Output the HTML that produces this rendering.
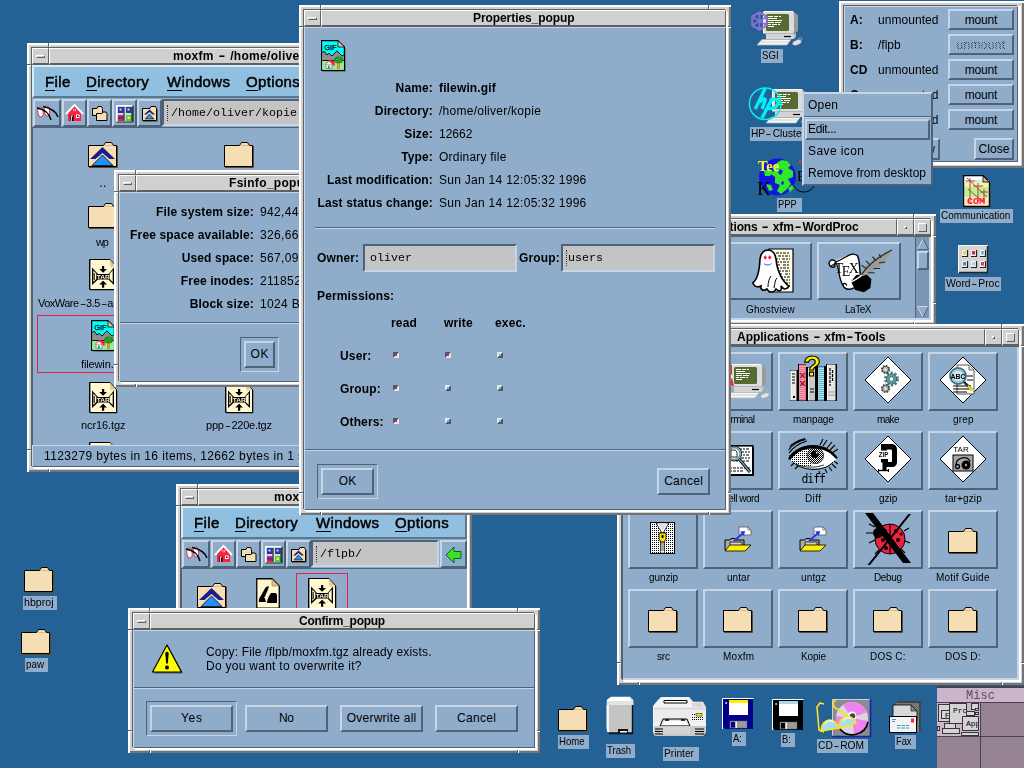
<!DOCTYPE html><html><head><meta charset="utf-8"><title>moxfm desktop</title><style>
html,body{margin:0;padding:0}
body{width:1024px;height:768px;background:#246296;overflow:hidden;position:relative;font-family:"Liberation Sans",sans-serif;font-size:12px;color:#000;line-height:14px}
div,span,svg,i{position:absolute;box-sizing:border-box}
i.d{position:static}
.ic{overflow:visible;will-change:transform}
.win{background:#D0D0D0;box-shadow:inset 2px 2px 0 #fff,inset -2px -2px 0 #747474}
.in{left:5px;top:5px;right:5px;bottom:5px;box-shadow:-1px -1px 0 #606060,1px 1px 0 #fff,2px 2px 0 #fff}
.tb{left:0;top:0;right:0;height:17px}
.mb{left:0;top:0;width:17px;height:17px;border:1px solid;border-color:#fff #606060 #606060 #fff;border-bottom-width:2px}
.mb i{position:absolute;left:3px;top:6px;width:9px;height:3px;border:1px solid;border-color:#fff #606060 #606060 #fff}
.tt{left:17px;top:0;right:0;height:17px;border:1px solid;border-color:#fff #606060 #606060 #fff;border-bottom-width:2px;font-weight:bold;text-align:center;line-height:14px;white-space:nowrap;overflow:hidden}
.tbtn{top:0;width:17px;height:17px;border:1px solid;border-color:#fff #606060 #606060 #fff;border-bottom-width:2px}
.cl{left:0;top:17px;right:0;bottom:0;background:#8FADCB;overflow:hidden}
.snk:after{content:"";position:absolute;left:0;top:0;right:0;bottom:0;box-shadow:inset 1px 1px 0 #4E6379,inset -2px -2px 0 #C6D6E6;pointer-events:none}
.dlg:after{content:"";position:absolute;left:0;top:0;right:0;bottom:0;box-shadow:inset 1px 1px 0 #C6D6E6,inset -1px -1px 0 #4E6379;pointer-events:none}
.hl{background:#606060;height:1px;width:5px}.hl:after{content:"";position:absolute;left:0;top:1px;width:5px;height:1px;background:#fff}
.vl{background:#606060;width:1px;height:5px}.vl:after{content:"";position:absolute;left:1px;top:0;height:5px;width:1px;background:#fff}
.btn{border:2px solid;border-color:#C6D6E6 #4E6379 #4E6379 #C6D6E6;background:#8FADCB;text-align:center;white-space:nowrap}
.dflt{border:1px solid;border-color:#4E6379 #C6D6E6 #C6D6E6 #4E6379}
.sep{height:2px;border-top:1px solid #4E6379;border-bottom:1px solid #C6D6E6}
.d{display:inline-block;position:static;font-style:normal;transform:scaleX(1.7);margin:0 .2em}
.t,.lbl,.btn>span,.menubar span,.tf,.mono,.tt{will-change:transform}
.t{white-space:nowrap;line-height:14px;height:14px;letter-spacing:.33px}
.b{font-weight:bold;letter-spacing:.15px}
.r{text-align:right}
.c{text-align:center}
.lbl{background:#8FADCB;white-space:nowrap;line-height:14px;height:14px;text-align:center}
.menubar{left:0;top:0;right:0;height:33px;background:#91BFDF;border:2px solid;border-color:#D6ECFA #58788E #58788E #D6ECFA;font-size:15px}
.menubar span{top:6px;line-height:18px;white-space:nowrap;-webkit-text-stroke:0.5px #000;letter-spacing:.35px}
.menubar u{text-decoration:none;border-bottom:1px solid #000;display:inline-block;line-height:17px}
.tool{left:0;top:33px;right:0;height:30px;background:#8FADCB;border-bottom:1px solid #4E6379}
.tbb{top:1px;width:25px;height:28px;border:2px solid;border-color:#C6D6E6 #4E6379 #4E6379 #C6D6E6}
.tf{background:#C4C4C4;border:2px solid;border-color:#4E6379 #C6D6E6 #C6D6E6 #4E6379;font-family:"Liberation Mono",monospace;font-size:11.67px;white-space:nowrap;overflow:hidden}
.mono{font-family:"Liberation Mono",monospace;font-size:11.67px}
.appb{width:70px;height:59px;border:2px solid;border-color:#C6D6E6 #4E6379 #4E6379 #C6D6E6}
.chk{width:7px;height:7px;border:1px solid;border-color:#4E6379 #C6D6E6 #C6D6E6 #4E6379;background:#C4C4C4}
</style></head><body><div style="left:0;top:0;width:1024px;height:768px;z-index:0"><svg class="ic" style="left:750px;top:10px" width="56" height="37" viewBox="0 0 56 37" ><g transform="translate(0,0)"><path d="M43 1.500 L48 5 V21 L43 24 Z" fill="#9a9a9a"/><rect x="13" y="1" width="31" height="23" rx="2" fill="#dcdcdc"/><path d="M13.500 23 V3 Q13.500 1.500 15 1.500 H43" fill="none" stroke="#fafafa" stroke-width="1"/><path d="M14 23.500 H43" stroke="#b4b4b4"/><rect x="16" y="4" width="23" height="17" rx="1.500" fill="#556B2F"/><path d="M18 6.500 h5 m1 0 h4 m1 0 h2 M18 8.500 h9 M18 10.500 h14 M18 12.500 h6 m1 0 h6 M18 14.500 h3 m1 0 h5 m1 0 h2 M18 16.500 h6" stroke="#fff" stroke-width="1.100"/><path d="M16 24 H44 L46 22.500 V27 L44 29 H16 Z" fill="#b8b8b8"/><path d="M16 24 H44 V29 H16 Z" fill="#d4d4d4"/><path d="M34 26.500 H41" stroke="#000" stroke-width="1.200"/><path d="M12 29.500 H41 L37 35 H7 Z" fill="#f6f6f6" stroke="#b8b8b8" stroke-width="0.800"/><path d="M11 32 H38" stroke="#d0d0d0"/><path d="M43 32 l5 -2.500 l3.500 1 l-1 3 l-5 2 l-3 -1 z" fill="#e4e4e4" stroke="#999" stroke-width="0.600"/><path d="M48 29.500 c2 -3 4.500 -2 3.500 0.500" fill="none" stroke="#bbb" stroke-width="0.800"/></g><g stroke="#8A70D6" stroke-width="1.500" fill="none" stroke-linejoin="round"><path d="M9.500 2 L17 6.500 V15.500 L9.500 20 L2 15.500 V6.500 Z"/><path d="M9.500 2 V20 M2 6.500 L17 15.500 M2 15.500 L17 6.500"/><path d="M5.500 4.500 L13.500 4.500 L17 11 L13.500 17.500 L5.500 17.500 L2 11 Z" stroke-width="1"/></g></svg><div class="lbl" style="left:761px;top:49px;width:22px;height:14px;line-height:12px;text-align:left;font-size:11px;letter-spacing:0px;padding-left:1.00px;overflow:hidden;"><span style="position:static;display:inline-block;transform:scaleX(0.875);transform-origin:0 0">SGI</span></div><svg class="ic" style="left:748px;top:87px" width="70" height="36" viewBox="0 0 70 36" ><g transform="translate(11,1)"><path d="M43 1.500 L48 5 V21 L43 24 Z" fill="#9a9a9a"/><rect x="13" y="1" width="31" height="23" rx="2" fill="#dcdcdc"/><path d="M13.500 23 V3 Q13.500 1.500 15 1.500 H43" fill="none" stroke="#fafafa" stroke-width="1"/><path d="M14 23.500 H43" stroke="#b4b4b4"/><rect x="16" y="4" width="23" height="17" rx="1.500" fill="#556B2F"/><path d="M18 6.500 h5 m1 0 h4 m1 0 h2 M18 8.500 h9 M18 10.500 h14 M18 12.500 h6 m1 0 h6 M18 14.500 h3 m1 0 h5 m1 0 h2 M18 16.500 h6" stroke="#fff" stroke-width="1.100"/><path d="M16 24 H44 L46 22.500 V27 L44 29 H16 Z" fill="#b8b8b8"/><path d="M16 24 H44 V29 H16 Z" fill="#d4d4d4"/><path d="M34 26.500 H41" stroke="#000" stroke-width="1.200"/><path d="M12 29.500 H41 L37 35 H7 Z" fill="#f6f6f6" stroke="#b8b8b8" stroke-width="0.800"/><path d="M11 32 H38" stroke="#d0d0d0"/><path d="M43 32 l5 -2.500 l3.500 1 l-1 3 l-5 2 l-3 -1 z" fill="#e4e4e4" stroke="#999" stroke-width="0.600"/><path d="M48 29.500 c2 -3 4.500 -2 3.500 0.500" fill="none" stroke="#bbb" stroke-width="0.800"/></g><circle cx="17.200" cy="16.700" r="15.800" fill="none" stroke="#00F0F8" stroke-width="1.500"/><path d="M17.200 1.500 L7.200 22 M11.600 15.500 C13.500 12 17 10.500 17.200 13 C17.200 15 15 19 14.200 22 M23.500 12.800 L14 31 M22 13.200 C27 11 31 12.500 30 16.500 C29 20 25 22 19.500 21.500" fill="none" stroke="#00F0F8" stroke-width="3.400"/></svg><div class="lbl" style="left:750px;top:127px;width:58px;height:14px;line-height:12px;text-align:left;font-size:11px;letter-spacing:0px;padding-left:1.00px;overflow:hidden;"><span style="position:static;display:inline-block;transform:scaleX(0.928);transform-origin:0 0">HP<i class="d">-</i>Cluster</span></div><svg class="ic" style="left:758px;top:157px" width="62" height="40" viewBox="0 0 62 40" ><circle cx="19.500" cy="20" r="18.500" fill="#1414e0"/><path d="M20 5 l4 -2 l5 1 l4 4 l-3 3 l5 3 l0 6 l-5 2 l3 5 l-5 6 l-5 4 l-4 -3 l3 -6 l-5 -2 l0 -6 l-4 -3 l4 -4 l-1 -4 z M6 14 l6 -2 l3 3 l-3 4 l-5 0 z M8 27 l5 1 l2 5 l-4 1 z M30 31 l4 -3 l2 3 l-4 4 z M26 7 l3 2 l-2 3 z" fill="#30e828"/><path d="M22 12 l3 2 l-2 4 l-3 -2 z M24 24 l2 1 l-1 3 l-2 -1 z" fill="#1414e0"/><text x="0" y="13.500" font-family="Liberation Serif, serif" font-weight="bold" font-size="14.500" fill="#ffff30">Tee</text><text x="-1" y="38" font-family="Liberation Serif, serif" font-size="19" fill="#000">K</text><text x="39" y="24" font-family="Liberation Serif, serif" font-size="14" fill="#000">E</text><path d="M36 29 C40 37 52 37 56 29" fill="none" stroke="#000" stroke-width="1"/><rect x="41" y="3" width="2" height="3" fill="#f03030"/></svg><div class="lbl" style="left:777px;top:198px;width:25px;height:14px;line-height:12px;text-align:left;font-size:11px;letter-spacing:0px;padding-left:1.00px;overflow:hidden;"><span style="position:static;display:inline-block;transform:scaleX(0.850);transform-origin:0 0">PPP</span></div><svg class="ic" style="left:963px;top:175px" width="28" height="33" viewBox="0 0 28 33" ><path d="M0.750 0.750 H20 L26.250 7 V31.250 H0.750 Z" fill="#e8f4d0" stroke="#000" stroke-width="1.300"/><rect x="1.500" y="1.500" width="19" height="5.500" fill="#fff"/><rect x="1.500" y="5" width="24" height="3" fill="#c8f0f8"/><rect x="1.500" y="8" width="24" height="4" fill="#fff0a0"/><rect x="1.500" y="12" width="24" height="11" fill="#b8f0a0"/><rect x="1.500" y="22" width="24" height="8.500" fill="#f8e8c0"/><path d="M4 3 L24 22 M3 6 H12 M7 3 V28 M10 11 H20 M15 8 V26 M17 17 H25 M21 14 V28 M5 14 l14 12" stroke="#c03020" stroke-width="0.900" fill="none"/><path d="M20 1 V7 H26 Z" fill="#DEB887" stroke="#000" stroke-width="0.800"/><text x="13" y="29" font-size="9" font-weight="bold" text-anchor="middle" fill="#ff1040" font-family="Liberation Mono, monospace" textLength="18" lengthAdjust="spacingAndGlyphs">COM</text><path d="M27.500 8 V32.500 H2" stroke="#3b4b5b" fill="none"/></svg><div class="lbl" style="left:940px;top:209px;width:73px;height:14px;line-height:12px;text-align:left;font-size:11px;letter-spacing:0px;padding-left:1.00px;overflow:hidden;"><span style="position:static;display:inline-block;transform:scaleX(0.906);transform-origin:0 0">Communication</span></div><svg class="ic" style="left:958px;top:245px" width="30" height="28" viewBox="0 0 30 28" ><rect x="0" y="0" width="30" height="28" fill="#d4d4d4"/><path d="M0.500 28 V0.500 H30" stroke="#f8f8f8" fill="none"/><path d="M29.500 1 V27.500 H1" stroke="#222" fill="none" stroke-width="1.400"/><rect x="4" y="5" width="5" height="6" fill="#f4f4f4"/><path d="M9.5 5 V11.5 H4" stroke="#222" fill="none" stroke-width="1.200"/><rect x="5" y="6" width="3" height="3.500" fill="#f0d040"/><rect x="13" y="5" width="5" height="6" fill="#f4f4f4"/><path d="M18.5 5 V11.5 H13" stroke="#222" fill="none" stroke-width="1.200"/><rect x="14" y="6" width="3" height="3.500" fill="#e02050"/><rect x="22" y="5" width="5" height="6" fill="#f4f4f4"/><path d="M27.5 5 V11.5 H22" stroke="#222" fill="none" stroke-width="1.200"/><rect x="23" y="6" width="3" height="3.500" fill="#60c0e0"/><rect x="4" y="16" width="5" height="6" fill="#f4f4f4"/><path d="M9.5 16 V22.5 H4" stroke="#222" fill="none" stroke-width="1.200"/><rect x="5" y="17" width="3" height="3.500" fill="#509090"/><rect x="13" y="16" width="5" height="6" fill="#f4f4f4"/><path d="M18.5 16 V22.5 H13" stroke="#222" fill="none" stroke-width="1.200"/><rect x="14" y="17" width="3" height="3.500" fill="#a0d8f0"/><rect x="22" y="16" width="5" height="6" fill="#f4f4f4"/><path d="M27.5 16 V22.5 H22" stroke="#222" fill="none" stroke-width="1.200"/><rect x="23" y="17" width="3" height="3.500" fill="#d04070"/></svg><div class="lbl" style="left:945px;top:277px;width:56px;height:14px;line-height:12px;text-align:left;font-size:11px;letter-spacing:0px;padding-left:1.00px;overflow:hidden;"><span style="position:static;display:inline-block;transform:scaleX(0.944);transform-origin:0 0">Word<i class="d">-</i>Proc</span></div><svg class="ic" style="left:24px;top:567px" width="30" height="26" viewBox="0 0 30 26" ><path d="M0.5 3.5 H15.5 L17.5 0.5 H23.5 L25.5 3.5 H28.5 V24.5 H0.5 Z" fill="#F5DEB3" stroke="#000" stroke-width="1"/><path d="M29.5 4 V25.5 H1" fill="none" stroke="#5b4a2c" stroke-width="1"/><path d="M16.500 3.500 H25" stroke="#d9bc8c" stroke-width="1"/></svg><div class="lbl" style="left:23px;top:596px;width:34px;height:14px;line-height:12px;text-align:left;font-size:11px;letter-spacing:0px;padding-left:1.00px;overflow:hidden;"><span style="position:static;display:inline-block;transform:scaleX(0.965);transform-origin:0 0">hbproj</span></div><svg class="ic" style="left:21px;top:629px" width="30" height="26" viewBox="0 0 30 26" ><path d="M0.5 3.5 H15.5 L17.5 0.5 H23.5 L25.5 3.5 H28.5 V24.5 H0.5 Z" fill="#F5DEB3" stroke="#000" stroke-width="1"/><path d="M29.5 4 V25.5 H1" fill="none" stroke="#5b4a2c" stroke-width="1"/><path d="M16.500 3.500 H25" stroke="#d9bc8c" stroke-width="1"/></svg><div class="lbl" style="left:25px;top:658px;width:23px;height:14px;line-height:12px;text-align:left;font-size:11px;letter-spacing:0px;padding-left:1.00px;overflow:hidden;"><span style="position:static;display:inline-block;transform:scaleX(0.892);transform-origin:0 0">paw</span></div><svg class="ic" style="left:558px;top:706px" width="30" height="26" viewBox="0 0 30 26" ><path d="M0.5 3.5 H15.5 L17.5 0.5 H23.5 L25.5 3.5 H28.5 V24.5 H0.5 Z" fill="#F5DEB3" stroke="#000" stroke-width="1"/><path d="M29.5 4 V25.5 H1" fill="none" stroke="#5b4a2c" stroke-width="1"/><path d="M16.500 3.500 H25" stroke="#d9bc8c" stroke-width="1"/></svg><div class="lbl" style="left:558px;top:735px;width:31px;height:14px;line-height:12px;text-align:left;font-size:11px;letter-spacing:0px;padding-left:1.00px;overflow:hidden;"><span style="position:static;display:inline-block;transform:scaleX(0.875);transform-origin:0 0">Home</span></div><svg class="ic" style="left:606px;top:696px" width="28" height="39" viewBox="0 0 28 39" ><path d="M1 4 L5 1 H24 L27 4 V9 H1 Z" fill="#fff" stroke="#fff" stroke-width="0.500"/><path d="M1 9 H27 V6 L24 1" fill="none" stroke="#bbb" stroke-width="0.800"/><rect x="1" y="5" width="26" height="4" fill="#e4e4e4"/><path d="M2 9 H26 V36 H2 Z" fill="#c4c4c4"/><path d="M2 9 V36" stroke="#f4f4f4" stroke-width="2"/><path d="M26.500 9 V37.500 H3" stroke="#111" stroke-width="1.400" fill="none"/><path d="M3 36 L1 33 V9" stroke="#fff" fill="none"/><rect x="12" y="33" width="10" height="4" fill="#111"/><rect x="14" y="35" width="7" height="1.500" fill="#fff"/></svg><div class="lbl" style="left:606px;top:744px;width:29px;height:14px;line-height:12px;text-align:left;font-size:11px;letter-spacing:0px;padding-left:1.00px;overflow:hidden;"><span style="position:static;display:inline-block;transform:scaleX(0.873);transform-origin:0 0">Trash</span></div><svg class="ic" style="left:653px;top:696px" width="54" height="41" viewBox="0 0 54 41" ><path d="M8 1 H36 L40 6 H50 L53 12 V36 L50 40 H2 L0 36 V10 L4 5 Z" fill="#f4f4f4"/><path d="M11 4.500 H34 V7 H11 Z" fill="#fff" stroke="#000" stroke-width="1"/><path d="M36 1 L40 6 H50 L53 12 H1" fill="none" stroke="#ccc" stroke-width="0.800"/><path d="M38 7 H49 L51 11 H40 Z" fill="#d8d8d8"/><rect x="1" y="13" width="52" height="13" fill="#ececec"/><path d="M1 13 H53" stroke="#d0d0d0"/><rect x="38" y="17" width="13" height="8" fill="#f8f8f8"/><rect x="43" y="17.500" width="6" height="2.500" fill="#ffee00" stroke="#000" stroke-width="0.500"/><path d="M39 18.500 h3 M39 21.500 h11 M39 23.500 h11" stroke="#000" stroke-width="1" stroke-dasharray="1 1"/><path d="M10 23 H34 L37 30 H7 Z" fill="#e0e0e0" stroke="#000" stroke-width="1"/><path d="M12 24 h4 M28 24 h4" stroke="#000" stroke-width="1.500"/><path d="M9 29 L12 25 H32 L35 29 Z" fill="#fff"/><path d="M1 30 H53 V36 L50 40 H2 L1 36 Z" fill="#c8c8c8"/><path d="M7 31 H37 V38 H7 Z" fill="#d4d4d4"/><path d="M2 33 h8 M2 35.500 h8 M2 38 h8 M42 33 h9 M42 35.500 h9 M42 38 h9" stroke="#000" stroke-width="1"/></svg><div class="lbl" style="left:663px;top:747px;width:36px;height:14px;line-height:12px;text-align:left;font-size:11px;letter-spacing:0px;padding-left:1.00px;overflow:hidden;"><span style="position:static;display:inline-block;transform:scaleX(0.926);transform-origin:0 0">Printer</span></div><svg class="ic" style="left:722px;top:698px" width="32" height="32" viewBox="0 0 32 32" ><path d="M1 1 H31 V31 H3 L1 29 Z" fill="#00008B"/><path d="M0.500 31 V0.500 H31.500" stroke="#fff" stroke-width="1" fill="none"/><rect x="7" y="2" width="19" height="15" fill="#fff"/><rect x="7" y="2" width="19" height="3" fill="#ffee00"/><rect x="8" y="23" width="17" height="7" fill="#9a9a9a" stroke="#666" stroke-width="0.500"/><rect x="9" y="24" width="4" height="5.500" fill="#00008B"/><rect x="13.500" y="23.500" width="1.500" height="6.500" fill="#eee"/><rect x="3.500" y="4" width="1.200" height="2" fill="#fff"/></svg><div class="lbl" style="left:732px;top:732px;width:14px;height:14px;line-height:12px;text-align:left;font-size:11px;letter-spacing:0px;padding-left:1.00px;overflow:hidden;"><span style="position:static;display:inline-block;transform:scaleX(0.856);transform-origin:0 0">A:</span></div><svg class="ic" style="left:772px;top:699px" width="32" height="32" viewBox="0 0 32 32" ><path d="M1 1 H31 V31 H3 L1 29 Z" fill="#000"/><path d="M0.500 31 V0.500 H31.500" stroke="#fff" stroke-width="1" fill="none"/><rect x="7" y="2" width="19" height="15" fill="#fff"/><rect x="7" y="2" width="19" height="3" fill="#a8d8f0"/><rect x="8" y="23" width="17" height="7" fill="#9a9a9a" stroke="#666" stroke-width="0.500"/><rect x="9" y="24" width="4" height="5.500" fill="#000"/><rect x="13.500" y="23.500" width="1.500" height="6.500" fill="#eee"/><rect x="3.500" y="4" width="1.200" height="2" fill="#fff"/></svg><div class="lbl" style="left:781px;top:733px;width:14px;height:14px;line-height:12px;text-align:left;font-size:11px;letter-spacing:0px;padding-left:1.00px;overflow:hidden;"><span style="position:static;display:inline-block;transform:scaleX(0.847);transform-origin:0 0">B:</span></div><svg class="ic" style="left:816px;top:698px" width="56" height="40" viewBox="0 0 56 40" ><rect x="16" y="1" width="38" height="37" fill="#8a8a98"/><path d="M16.500 38 V1.500 H54" stroke="#d0d0d0" fill="none"/><path d="M54.500 1 V38.500 H16" stroke="#2020a0" stroke-width="1.600" fill="none"/><circle cx="36" cy="20" r="16" fill="#d8d8d8"/><path d="M36 20 L27 7 A16 16 0 0 1 51 14 Z M36 20 L52 23 A16 16 0 0 1 38 36 Z M36 20 L24 31 A16 16 0 0 1 20 18 Z" fill="#ee82ee"/><circle cx="36" cy="20" r="16" fill="none" stroke="#000" stroke-width="0" /><path d="M24 31 A16 16 0 0 0 52 24" fill="none" stroke="#000" stroke-width="1.600"/><circle cx="36" cy="18" r="4.500" fill="#fff"/><circle cx="36.500" cy="18" r="2.800" fill="#444"/><path d="M8 6 L4 5 L1 9 L3 32 L8 34 M20 2 L17 4 L18 9 L40 24" fill="none" stroke="#ffe020" stroke-width="1.600"/><path d="M5 33 C5 20 20 18 22 30 Z M23 30 C23 17 36 15 40 25 Z" fill="#a0e0f0" stroke="#ffe020" stroke-width="1.600"/><path d="M9 26 C11 22 15 22 17 24 M27 23 C29 19 33 19 35 21" stroke="#fff" stroke-width="1.200" fill="none"/></svg><div class="lbl" style="left:817px;top:739px;width:51px;height:14px;line-height:12px;text-align:left;font-size:11px;letter-spacing:0px;padding-left:1.00px;overflow:hidden;"><span style="position:static;display:inline-block;transform:scaleX(0.929);transform-origin:0 0">CD<i class="d">-</i>ROM</span></div><svg class="ic" style="left:889px;top:701px" width="33" height="33" viewBox="0 0 33 33" ><path d="M8 0 H32 V30 H26 V6 H8 Z" fill="#444"/><path d="M6 2 H30 V31 H24 Z" fill="#777"/><path d="M4 4 H22 L28 10 V20 H4 Z" fill="#d8d8d8" stroke="#000" stroke-width="0.800"/><path d="M22 4 V10 H28 Z" fill="#888" stroke="#000" stroke-width="0.600"/><rect x="0.500" y="15.500" width="27" height="16" fill="#f4f4f4" stroke="#000" stroke-width="1"/><path d="M3 18.500 h4 M3 20.500 h3 M8 24.500 h4 m1 0 h3 m1 0 h3 M8 27 h3 m1 0 h4 m1 0 h3" stroke="#4090e0" stroke-width="1"/><rect x="22" y="17.500" width="3" height="4" fill="#ff2040"/></svg><div class="lbl" style="left:895px;top:735px;width:21px;height:14px;line-height:12px;text-align:left;font-size:11px;letter-spacing:0px;padding-left:1.00px;overflow:hidden;"><span style="position:static;display:inline-block;transform:scaleX(0.846);transform-origin:0 0">Fax</span></div></div>
<div class="win" style="left:27px;top:43px;width:433px;height:429px;z-index:1"><div class="vl" style="left:21px;top:0px"></div><div class="vl" style="left:410px;top:0px"></div><div class="vl" style="left:21px;top:424px"></div><div class="vl" style="left:410px;top:424px"></div><div class="hl" style="left:0px;top:21px"></div><div class="hl" style="left:428px;top:21px"></div><div class="hl" style="left:0px;top:406px"></div><div class="hl" style="left:428px;top:406px"></div><div class="in" style=""><div class="tb"><div class="mb"><i></i></div><div class="tt" style="right:0px;"><span class="t b" style="left:122.5px;top:0px;letter-spacing:.3px">moxfm <i class="d">-</i> /home/oliver/kopie</span></div></div><div class="cl"><div class="menubar"><span style="left:11px"><u>F</u>ile</span><span style="left:52px"><u>D</u>irectory</span><span style="left:133px"><u>W</u>indows</span><span style="left:212px"><u>O</u>ptions</span></div><div class="tool"><div class="tbb" style="left:1px;width:28px"><svg class="ic" style="left:-1px;top:-1px" width="25" height="26" viewBox="0 0 25 26"><ellipse cx="6.5" cy="12" rx="2.6" ry="5" fill="#fff" stroke="#d04060" stroke-width="1" transform="rotate(-8 6.5 12)"/><ellipse cx="13" cy="11" rx="2.6" ry="5" fill="#fff" stroke="#d04060" stroke-width="1" transform="rotate(-8 13 11)"/><path d="M3 8 C9 9 15 12 17 20 M9 6.5 C16 8 22 11 24 17" fill="none" stroke="#000" stroke-width="1.5"/></svg></div><div class="tbb" style="left:30px;width:25px"><svg class="ic" style="left:-2px;top:-1px" width="25" height="26" viewBox="0 0 25 26"><path d="M4 14 L12.5 5 L21 14" fill="none" stroke="#fff" stroke-width="2"/><path d="M6 13.5 L12.5 6.5 L19 13.5 V21 H6 Z" fill="#ff2040"/><rect x="8.5" y="15" width="3" height="6" fill="#000"/><rect x="9" y="15.5" width="2" height="5.5" fill="#fff"/><rect x="9.8" y="16.5" width="1.2" height="4.5" fill="#000"/><rect x="14" y="14.5" width="3.5" height="3.5" fill="#fff"/><rect x="15" y="15.5" width="1.5" height="1.5" fill="#000"/><rect x="11.5" y="9" width="2.2" height="2.2" fill="#fff"/><rect x="12.1" y="9.6" width="1" height="1" fill="#000"/></svg></div><div class="tbb" style="left:55px;width:25px"><svg class="ic" style="left:-2px;top:-1px" width="25" height="26" viewBox="0 0 25 26"><path d="M5.500 8.500 H10 L11 6.500 H14.500 L15.500 8.500 V15.500 H5.500 Z" fill="#F5DEB3" stroke="#000"/><path d="M9.500 13.500 H15 L16 12 H19 L20 13.500 V20.500 H9.500 Z" fill="#F5DEB3" stroke="#000"/></svg></div><div class="tbb" style="left:80px;width:25px"><svg class="ic" style="left:-2px;top:-1px" width="25" height="26" viewBox="0 0 25 26"><rect x="4" y="5" width="17" height="17" fill="#d8d8d8"/><path d="M4.5 22 V5.500 H21" stroke="#fff" fill="none"/><path d="M21 5.500 V22 H4.500" stroke="#222" fill="none" stroke-width="1.2"/><rect x="6" y="7" width="5.5" height="6" fill="#2030d0"/><rect x="14" y="7" width="5.500" height="6" fill="#2030d0"/><rect x="6" y="15" width="5.500" height="6" fill="#e02050"/><rect x="14" y="15" width="5.500" height="6" fill="#40d040"/><rect x="7.500" y="8.500" width="2" height="2" fill="#f0f040"/><rect x="15.500" y="8.500" width="2" height="2" fill="#f0f040"/><rect x="6" y="17" width="5.500" height="1.500" fill="#2030d0"/><rect x="15.500" y="16.500" width="2.500" height="2.500" fill="#f0f040"/><path d="M12 7 V21 M20 7 V21" stroke="#000" stroke-width="1"/></svg></div><div class="tbb" style="left:105px;width:25px"><svg class="ic" style="left:-2px;top:-1px" width="25" height="26" viewBox="0 0 25 26"><path d="M5.500 8.500 H13 L14 6.500 H18.500 L19.500 8.500 V20.500 H5.500 Z" fill="#F5DEB3" stroke="#000"/><path d="M7 14.500 L12.500 9.500 L18 14.500 H15.500 L12.500 12 L9.500 14.500 Z" fill="#1c1c8c"/><path d="M8 19 L12.500 14 L17 19 Z" fill="#1e90ff" stroke="#000" stroke-width="0.6"/><path d="M20.500 9 V21.500 H6" stroke="#665" fill="none"/></svg></div><div class="tf" style="left:130px;top:1px;width:300px;height:27px;line-height:23px;padding-left:7px;padding-top:1px"><i style="position:absolute;left:3px;top:4px;width:3px;height:16px;border-left:1px dotted #333"></i>/home/oliver/kopie</div></div><div style="left:0;top:63px;right:0;height:317px;border-left:1px solid #4E6379;border-top:0 solid #4E6379;overflow:hidden"><svg class="ic" style="left:55px;top:14px" width="30" height="26" viewBox="0 0 30 26" ><path d="M0.5 3.5 H15.5 L17.5 0.5 H23.5 L25.5 3.5 H28.5 V24.5 H0.5 Z" fill="#F5DEB3" stroke="#000" stroke-width="1"/><path d="M29.5 4 V25.5 H1" fill="none" stroke="#5b4a2c" stroke-width="1"/><path d="M16.500 3.500 H25" stroke="#d9bc8c" stroke-width="1"/><path d="M2 17 L14.5 5 L27 17 H21.5 L14.5 11 L7.5 17 Z" fill="#1c1c8c"/><path d="M4 23.5 L14.5 13 L25 23.5 Z" fill="#1e90ff" stroke="#000" stroke-width="0.8"/></svg><span class="t c" style="left:40px;top:48px;width:60px;">..</span><svg class="ic" style="left:191px;top:14px" width="30" height="26" viewBox="0 0 30 26" ><path d="M0.5 3.5 H15.5 L17.5 0.5 H23.5 L25.5 3.5 H28.5 V24.5 H0.5 Z" fill="#F5DEB3" stroke="#000" stroke-width="1"/><path d="M29.5 4 V25.5 H1" fill="none" stroke="#5b4a2c" stroke-width="1"/><path d="M16.500 3.500 H25" stroke="#d9bc8c" stroke-width="1"/></svg><svg class="ic" style="left:55px;top:75px" width="30" height="26" viewBox="0 0 30 26" ><path d="M0.5 3.5 H15.5 L17.5 0.5 H23.5 L25.5 3.5 H28.5 V24.5 H0.5 Z" fill="#F5DEB3" stroke="#000" stroke-width="1"/><path d="M29.5 4 V25.5 H1" fill="none" stroke="#5b4a2c" stroke-width="1"/><path d="M16.500 3.500 H25" stroke="#d9bc8c" stroke-width="1"/></svg><span class="t " style="left:63.30px;top:107px;letter-spacing:-1.135px;font-size:11px;">wp</span><svg class="ic" style="left:56px;top:131px" width="29" height="32" viewBox="0 0 29 32" ><path d="M0.500 0.500 H21 L27.500 7.500 V30.500 H0.500 Z" fill="#FFF8D0" stroke="#000" stroke-width="1"/><path d="M1.250 1 V30" stroke="#000" stroke-width="0.700"/><path d="M2.200 1.500 V29.500" stroke="#fff" stroke-width="0.800"/><path d="M21 1 V7.500 H27 Z" fill="#E6C898"/><path d="M21.500 8.300 H27" stroke="#E6C898" stroke-width="0.800"/><path d="M3 8.500 V26 L9 20.500 H19.500 L25 26 V8.500 L19.500 15 H9 Z" fill="#000"/><path d="M4.300 11.500 V23 L7.300 20 V14.500 Z M23.700 11.500 V23 L20.700 20 V14.500 Z" fill="#FFF8D0"/><path d="M5.200 14 V21" stroke="#000" stroke-width="1"/><path d="M13 7 h2.200 v3 h2.800 l-3.900 3.700 l-3.900 -3.700 h2.800 z M13 28.700 h2.200 v-3.200 h2.800 l-3.900 -3.700 l-3.900 3.700 h2.800 z" fill="#000"/><text x="14.200" y="20" font-size="6" font-weight="bold" text-anchor="middle" fill="#FFF8D0" font-family="Liberation Sans, sans-serif" textLength="13" lengthAdjust="spacingAndGlyphs">TAR</text><path d="M28.500 8.500 V31.500 H1.500" stroke="#6f7f90" fill="none"/></svg><span class="t " style="left:5.00px;top:168px;letter-spacing:-0.524px;font-size:11px;">VoxWare<i class="d">-</i>3.5<i class="d">-</i>a</span><div style="left:4px;top:187px;width:130px;height:58px;border:1px solid #e02050"></div><svg class="ic" style="left:58px;top:192px" width="25" height="32" viewBox="0 0 25 32" ><path d="M0.600 0.600 H17 L23.400 7 V30.400 H0.600 Z" fill="#00FFFF" stroke="#000" stroke-width="1.200"/><path d="M1.200 13 L3.500 11.500 L6 15 L8 13.200 L11 16 L16 10.800 L18 13 L21 16 L22.800 15 V21 H1.200 Z" fill="#8c8c8c"/><path d="M1.200 12.500 L3.500 11.300 L6 15 L8 13.200 L11 16 L16 10.800 L18 13 L21 16 L22.800 15" fill="none" stroke="#000" stroke-width="0.900"/><path d="M3 19 l2 -3 M7 19 l2 -2.500 M12 19 l2 -3" stroke="#aaa" stroke-width="0.600"/><rect x="1.200" y="20.500" width="21.600" height="9.300" fill="#98EE98"/><path d="M1.200 20.500 H22.800" stroke="#000" stroke-width="0.900"/><path d="M17 1 V7 H23 Z" fill="#E6C898"/><path d="M17 1 V7 H23" fill="none" stroke="#000" stroke-width="0.800"/><path d="M3 25 L8 20 L13 25 V26 L12 25 L8 21.500 Z" fill="#ff2040"/><path d="M8 20 L13.500 21 L14 25.500 L12 25 Z" fill="#ff2040"/><rect x="5" y="24" width="6" height="4.500" fill="#ececec" stroke="#667" stroke-width="0.600"/><path d="M5 24 L8 21.500 L11 24 Z" fill="#ececec"/><rect x="7" y="25.500" width="1.600" height="3" fill="#667"/><ellipse cx="17.500" cy="20" rx="4.500" ry="3.600" fill="#228B22"/><circle cx="16" cy="19.500" r=".6" fill="#5f5"/><circle cx="18.500" cy="18.500" r=".6" fill="#5f5"/><circle cx="19" cy="21" r=".6" fill="#5f5"/><circle cx="15" cy="21.500" r=".5" fill="#5f5"/><rect x="16.600" y="23" width="2" height="5.500" fill="#FFA500" stroke="#a52" stroke-width="0.500"/><text x="9.400" y="9.800" font-size="8" text-anchor="middle" font-family="Liberation Sans, sans-serif" fill="#000" stroke="#000" stroke-width="0.250" textLength="12.500" lengthAdjust="spacingAndGlyphs">GIF</text><path d="M24.500 8 V31.500 H2" stroke="#6a7a8a" fill="none"/></svg><span class="t " style="left:47.50px;top:229px;letter-spacing:-0.127px;font-size:11px;">filewin.gif</span><svg class="ic" style="left:56px;top:254px" width="29" height="32" viewBox="0 0 29 32" ><path d="M0.500 0.500 H21 L27.500 7.500 V30.500 H0.500 Z" fill="#FFF8D0" stroke="#000" stroke-width="1"/><path d="M1.250 1 V30" stroke="#000" stroke-width="0.700"/><path d="M2.200 1.500 V29.500" stroke="#fff" stroke-width="0.800"/><path d="M21 1 V7.500 H27 Z" fill="#E6C898"/><path d="M21.500 8.300 H27" stroke="#E6C898" stroke-width="0.800"/><path d="M3 8.500 V26 L9 20.500 H19.500 L25 26 V8.500 L19.500 15 H9 Z" fill="#000"/><path d="M4.300 11.500 V23 L7.300 20 V14.500 Z M23.700 11.500 V23 L20.700 20 V14.500 Z" fill="#FFF8D0"/><path d="M5.200 14 V21" stroke="#000" stroke-width="1"/><path d="M13 7 h2.200 v3 h2.800 l-3.900 3.700 l-3.900 -3.700 h2.800 z M13 28.700 h2.200 v-3.200 h2.800 l-3.900 -3.700 l-3.900 3.700 h2.800 z" fill="#000"/><text x="14.200" y="20" font-size="6" font-weight="bold" text-anchor="middle" fill="#FFF8D0" font-family="Liberation Sans, sans-serif" textLength="13" lengthAdjust="spacingAndGlyphs">TAR</text><path d="M28.500 8.500 V31.500 H1.500" stroke="#6f7f90" fill="none"/></svg><span class="t " style="left:47.50px;top:290px;letter-spacing:-0.096px;font-size:11px;">ncr16.tgz</span><svg class="ic" style="left:192px;top:254px" width="29" height="32" viewBox="0 0 29 32" ><path d="M0.500 0.500 H21 L27.500 7.500 V30.500 H0.500 Z" fill="#FFF8D0" stroke="#000" stroke-width="1"/><path d="M1.250 1 V30" stroke="#000" stroke-width="0.700"/><path d="M2.200 1.500 V29.500" stroke="#fff" stroke-width="0.800"/><path d="M21 1 V7.500 H27 Z" fill="#E6C898"/><path d="M21.500 8.300 H27" stroke="#E6C898" stroke-width="0.800"/><path d="M3 8.500 V26 L9 20.500 H19.500 L25 26 V8.500 L19.500 15 H9 Z" fill="#000"/><path d="M4.300 11.500 V23 L7.300 20 V14.500 Z M23.700 11.500 V23 L20.700 20 V14.500 Z" fill="#FFF8D0"/><path d="M5.200 14 V21" stroke="#000" stroke-width="1"/><path d="M13 7 h2.200 v3 h2.800 l-3.900 3.700 l-3.900 -3.700 h2.800 z M13 28.700 h2.200 v-3.200 h2.800 l-3.900 -3.700 l-3.900 3.700 h2.800 z" fill="#000"/><text x="14.200" y="20" font-size="6" font-weight="bold" text-anchor="middle" fill="#FFF8D0" font-family="Liberation Sans, sans-serif" textLength="13" lengthAdjust="spacingAndGlyphs">TAR</text><path d="M28.500 8.500 V31.500 H1.500" stroke="#6f7f90" fill="none"/></svg><span class="t " style="left:172.50px;top:290px;letter-spacing:-0.24px;font-size:11px;">ppp<i class="d">-</i>220e.tgz</span><svg class="ic" style="left:56px;top:314px" width="29" height="32" viewBox="0 0 29 32" ><path d="M0.500 0.500 H21 L27.500 7.500 V30.500 H0.500 Z" fill="#FFF8D0" stroke="#000" stroke-width="1"/><path d="M1.250 1 V30" stroke="#000" stroke-width="0.700"/><path d="M2.200 1.500 V29.500" stroke="#fff" stroke-width="0.800"/><path d="M21 1 V7.500 H27 Z" fill="#E6C898"/><path d="M21.500 8.300 H27" stroke="#E6C898" stroke-width="0.800"/><path d="M3 8.500 V26 L9 20.500 H19.500 L25 26 V8.500 L19.500 15 H9 Z" fill="#000"/><path d="M4.300 11.500 V23 L7.300 20 V14.500 Z M23.700 11.500 V23 L20.700 20 V14.500 Z" fill="#FFF8D0"/><path d="M5.200 14 V21" stroke="#000" stroke-width="1"/><path d="M13 7 h2.200 v3 h2.800 l-3.900 3.700 l-3.900 -3.700 h2.800 z M13 28.700 h2.200 v-3.200 h2.800 l-3.900 -3.700 l-3.900 3.700 h2.800 z" fill="#000"/><text x="14.200" y="20" font-size="6" font-weight="bold" text-anchor="middle" fill="#FFF8D0" font-family="Liberation Sans, sans-serif" textLength="13" lengthAdjust="spacingAndGlyphs">TAR</text><path d="M28.500 8.500 V31.500 H1.500" stroke="#6f7f90" fill="none"/></svg></div><div style="left:0;top:380px;right:0;height:22px;border:1px solid;border-color:#C6D6E6 #4E6379 #4E6379 #C6D6E6"><span class="t" style="left:11px;top:3px;font-size:12px;letter-spacing:.38px">1123279 bytes in 16 items, 12662 bytes in 1 selected item</span></div></div></div></div>
<div class="win" style="left:114px;top:170px;width:289px;height:217px;z-index:2"><div class="vl" style="left:21px;top:0px"></div><div class="vl" style="left:266px;top:0px"></div><div class="vl" style="left:21px;top:212px"></div><div class="vl" style="left:266px;top:212px"></div><div class="hl" style="left:0px;top:21px"></div><div class="hl" style="left:284px;top:21px"></div><div class="hl" style="left:0px;top:194px"></div><div class="hl" style="left:284px;top:194px"></div><div class="in" style=""><div class="tb"><div class="mb"><i></i></div><div class="tt" style="right:0px;"><span class="t b" style="left:91.69999999999999px;top:0px;letter-spacing:.3px">Fsinfo_popup</span></div></div><div class="cl dlg"><span class="t b r" style="left:0px;top:13px;width:135px;">File system size:</span><span class="t " style="left:141px;top:13px;">942,444 KB</span><span class="t b r" style="left:0px;top:36px;width:135px;">Free space available:</span><span class="t " style="left:141px;top:36px;">326,667 KB</span><span class="t b r" style="left:0px;top:59px;width:135px;">Used space:</span><span class="t " style="left:141px;top:59px;">567,093 KB</span><span class="t b r" style="left:0px;top:82px;width:135px;">Free inodes:</span><span class="t " style="left:141px;top:82px;">211852</span><span class="t b r" style="left:0px;top:105px;width:135px;">Block size:</span><span class="t " style="left:141px;top:105px;">1024 B</span><div class="sep" style="left:0px;top:130px;width:290px"></div><div class="dflt" style="left:121px;top:145px;width:39px;height:35px"></div><div class="btn" style="left:125px;top:149px;width:31px;height:27px;line-height:23px"><span style="position:static;letter-spacing:0.66px;margin-right:-0.66px">OK</span></div></div></div></div>
<div class="win" style="left:176px;top:484px;width:296px;height:200px;z-index:3"><div class="vl" style="left:21px;top:0px"></div><div class="vl" style="left:273px;top:0px"></div><div class="vl" style="left:21px;top:195px"></div><div class="vl" style="left:273px;top:195px"></div><div class="hl" style="left:0px;top:21px"></div><div class="hl" style="left:291px;top:21px"></div><div class="hl" style="left:0px;top:177px"></div><div class="hl" style="left:291px;top:177px"></div><div class="in" style=""><div class="tb"><div class="mb"><i></i></div><div class="tt" style="right:0px;"><span class="t b" style="left:74.5px;top:0px;letter-spacing:.3px">moxfm <i class="d">-</i> /flpb</span></div></div><div class="cl"><div class="menubar"><span style="left:11px"><u>F</u>ile</span><span style="left:52px"><u>D</u>irectory</span><span style="left:133px"><u>W</u>indows</span><span style="left:212px"><u>O</u>ptions</span></div><div class="tool"><div class="tbb" style="left:1px;width:28px"><svg class="ic" style="left:-1px;top:-1px" width="25" height="26" viewBox="0 0 25 26"><ellipse cx="6.5" cy="12" rx="2.6" ry="5" fill="#fff" stroke="#d04060" stroke-width="1" transform="rotate(-8 6.5 12)"/><ellipse cx="13" cy="11" rx="2.6" ry="5" fill="#fff" stroke="#d04060" stroke-width="1" transform="rotate(-8 13 11)"/><path d="M3 8 C9 9 15 12 17 20 M9 6.5 C16 8 22 11 24 17" fill="none" stroke="#000" stroke-width="1.5"/></svg></div><div class="tbb" style="left:30px;width:25px"><svg class="ic" style="left:-2px;top:-1px" width="25" height="26" viewBox="0 0 25 26"><path d="M4 14 L12.5 5 L21 14" fill="none" stroke="#fff" stroke-width="2"/><path d="M6 13.5 L12.5 6.5 L19 13.5 V21 H6 Z" fill="#ff2040"/><rect x="8.5" y="15" width="3" height="6" fill="#000"/><rect x="9" y="15.5" width="2" height="5.5" fill="#fff"/><rect x="9.8" y="16.5" width="1.2" height="4.5" fill="#000"/><rect x="14" y="14.5" width="3.5" height="3.5" fill="#fff"/><rect x="15" y="15.5" width="1.5" height="1.5" fill="#000"/><rect x="11.5" y="9" width="2.2" height="2.2" fill="#fff"/><rect x="12.1" y="9.6" width="1" height="1" fill="#000"/></svg></div><div class="tbb" style="left:55px;width:25px"><svg class="ic" style="left:-2px;top:-1px" width="25" height="26" viewBox="0 0 25 26"><path d="M5.500 8.500 H10 L11 6.500 H14.500 L15.500 8.500 V15.500 H5.500 Z" fill="#F5DEB3" stroke="#000"/><path d="M9.500 13.500 H15 L16 12 H19 L20 13.500 V20.500 H9.500 Z" fill="#F5DEB3" stroke="#000"/></svg></div><div class="tbb" style="left:80px;width:25px"><svg class="ic" style="left:-2px;top:-1px" width="25" height="26" viewBox="0 0 25 26"><rect x="4" y="5" width="17" height="17" fill="#d8d8d8"/><path d="M4.5 22 V5.500 H21" stroke="#fff" fill="none"/><path d="M21 5.500 V22 H4.500" stroke="#222" fill="none" stroke-width="1.2"/><rect x="6" y="7" width="5.5" height="6" fill="#2030d0"/><rect x="14" y="7" width="5.500" height="6" fill="#2030d0"/><rect x="6" y="15" width="5.500" height="6" fill="#e02050"/><rect x="14" y="15" width="5.500" height="6" fill="#40d040"/><rect x="7.500" y="8.500" width="2" height="2" fill="#f0f040"/><rect x="15.500" y="8.500" width="2" height="2" fill="#f0f040"/><rect x="6" y="17" width="5.500" height="1.500" fill="#2030d0"/><rect x="15.500" y="16.500" width="2.500" height="2.500" fill="#f0f040"/><path d="M12 7 V21 M20 7 V21" stroke="#000" stroke-width="1"/></svg></div><div class="tbb" style="left:105px;width:25px"><svg class="ic" style="left:-2px;top:-1px" width="25" height="26" viewBox="0 0 25 26"><path d="M5.500 8.500 H13 L14 6.500 H18.500 L19.500 8.500 V20.500 H5.500 Z" fill="#F5DEB3" stroke="#000"/><path d="M7 14.500 L12.500 9.500 L18 14.500 H15.500 L12.500 12 L9.500 14.500 Z" fill="#1c1c8c"/><path d="M8 19 L12.500 14 L17 19 Z" fill="#1e90ff" stroke="#000" stroke-width="0.6"/><path d="M20.500 9 V21.500 H6" stroke="#665" fill="none"/></svg></div><div class="tf" style="left:130px;top:1px;width:128px;height:27px;line-height:23px;padding-left:7px;padding-top:1px"><i style="position:absolute;left:3px;top:4px;width:3px;height:16px;border-left:1px dotted #333"></i>/flpb/</div><div class="tbb" style="left:259px;width:27px"><svg class="ic" style="left:3px;top:4px" width="18" height="18" viewBox="0 0 18 18"><path d="M1 9 L9 1 V5.500 H16 V12.500 H9 V17 Z" fill="#40e020" stroke="#063" stroke-width="1"/></svg></div></div><div style="left:0;top:63px;right:0;bottom:0;border-left:1px solid #4E6379;overflow:hidden"><svg class="ic" style="left:15px;top:14px" width="30" height="26" viewBox="0 0 30 26" ><path d="M0.5 3.5 H15.5 L17.5 0.5 H23.5 L25.5 3.5 H28.5 V24.5 H0.5 Z" fill="#F5DEB3" stroke="#000" stroke-width="1"/><path d="M29.5 4 V25.5 H1" fill="none" stroke="#5b4a2c" stroke-width="1"/><path d="M16.500 3.500 H25" stroke="#d9bc8c" stroke-width="1"/><path d="M2 17 L14.5 5 L27 17 H21.5 L14.5 11 L7.5 17 Z" fill="#1c1c8c"/><path d="M4 23.5 L14.5 13 L25 23.5 Z" fill="#1e90ff" stroke="#000" stroke-width="0.8"/></svg><svg class="ic" style="left:74px;top:9px" width="25" height="32" viewBox="0 0 25 32" ><path d="M0.750 0.750 H16 L23.25 8 V30.25 H0.750 Z" fill="#FFF8D0" stroke="#000" stroke-width="1.300" stroke-linejoin="miter"/><path d="M16 1 V8 H23 Z" fill="#DEB887" stroke="#000" stroke-width="0"/><path d="M16 2 V8 H22" fill="none" stroke="#c8a070" stroke-width="1"/><path d="M3 24 C2 20 6 17 8 12 L10 9 L13 8 C12 13 9 17 9 20 L10 24 Z M11 25 C11 21 13 18 15 15 L20 15 L21 17 V25 Z" fill="#000"/><path d="M8 19 l3 3 l-1 3" stroke="#FFF8D0" fill="none" stroke-width="0.800"/></svg><div style="left:114px;top:4px;width:52px;height:60px;border:1px solid #e02050"></div><svg class="ic" style="left:126px;top:9px" width="29" height="32" viewBox="0 0 29 32" ><path d="M0.500 0.500 H21 L27.500 7.500 V30.500 H0.500 Z" fill="#FFF8D0" stroke="#000" stroke-width="1"/><path d="M1.250 1 V30" stroke="#000" stroke-width="0.700"/><path d="M2.200 1.500 V29.500" stroke="#fff" stroke-width="0.800"/><path d="M21 1 V7.500 H27 Z" fill="#E6C898"/><path d="M21.500 8.300 H27" stroke="#E6C898" stroke-width="0.800"/><path d="M3 8.500 V26 L9 20.500 H19.500 L25 26 V8.500 L19.500 15 H9 Z" fill="#000"/><path d="M4.300 11.500 V23 L7.300 20 V14.500 Z M23.700 11.500 V23 L20.700 20 V14.500 Z" fill="#FFF8D0"/><path d="M5.200 14 V21" stroke="#000" stroke-width="1"/><path d="M13 7 h2.200 v3 h2.800 l-3.900 3.700 l-3.900 -3.700 h2.800 z M13 28.700 h2.200 v-3.200 h2.800 l-3.900 -3.700 l-3.900 3.700 h2.800 z" fill="#000"/><text x="14.200" y="20" font-size="6" font-weight="bold" text-anchor="middle" fill="#FFF8D0" font-family="Liberation Sans, sans-serif" textLength="13" lengthAdjust="spacingAndGlyphs">TAR</text><path d="M28.500 8.500 V31.500 H1.500" stroke="#6f7f90" fill="none"/></svg></div></div></div></div>
<div class="win" style="left:128px;top:608px;width:412px;height:145px;z-index:4"><div class="vl" style="left:21px;top:0px"></div><div class="vl" style="left:389px;top:0px"></div><div class="vl" style="left:21px;top:140px"></div><div class="vl" style="left:389px;top:140px"></div><div class="hl" style="left:0px;top:21px"></div><div class="hl" style="left:407px;top:21px"></div><div class="hl" style="left:0px;top:122px"></div><div class="hl" style="left:407px;top:122px"></div><div class="in" style=""><div class="tb"><div class="mb"><i></i></div><div class="tt" style="right:0px;"><span class="t b " style="left:148.00px;top:0px;letter-spacing:-0.262px;">Confirm_popup</span></div></div><div class="cl dlg"><svg class="ic" style="left:19px;top:14px" width="32" height="31" viewBox="0 0 32 31" ><path d="M15 1 L29.500 28 H0.500 Z" fill="#5a5a5a" transform="translate(1.500,1.500)"/><path d="M15 1 L29.500 28 H0.500 Z" fill="#FFFF00" stroke="#000" stroke-width="1.200" stroke-linejoin="round"/><path d="M13.300 9.500 a1.700 1.700 0 0 1 3.400 0 L15.800 19.500 h-1.600 Z" fill="#000"/><circle cx="15" cy="23.500" r="2" fill="#000"/></svg><span class="t " style="left:72.50px;top:15px;letter-spacing:0.164px;">Copy: File /flpb/moxfm.tgz already exists.</span><span class="t " style="left:72.50px;top:29px;letter-spacing:0.275px;">Do you want to overwrite it?</span><div class="sep" style="left:0px;top:57px;width:401px"></div><div class="dflt" style="left:13px;top:71px;width:91px;height:35px"></div><div class="btn" style="left:17px;top:75px;width:83px;height:27px;line-height:23px"><span style="position:static;letter-spacing:0.595px;margin-right:-0.595px">Yes</span></div><div class="btn" style="left:112px;top:75px;width:83px;height:27px;line-height:23px"><span style="position:static;letter-spacing:-0.36px;margin-right:0.36px">No</span></div><div class="btn" style="left:207px;top:75px;width:83px;height:27px;line-height:23px"><span style="position:static;letter-spacing:0.237px;margin-right:-0.237px">Overwrite all</span></div><div class="btn" style="left:302px;top:75px;width:83px;height:27px;line-height:23px"><span style="position:static;letter-spacing:0.324px;margin-right:-0.324px">Cancel</span></div></div></div></div>
<div class="win" style="left:299px;top:5px;width:432px;height:510px;z-index:10"><div class="vl" style="left:21px;top:0px"></div><div class="vl" style="left:409px;top:0px"></div><div class="vl" style="left:21px;top:505px"></div><div class="vl" style="left:409px;top:505px"></div><div class="hl" style="left:0px;top:21px"></div><div class="hl" style="left:427px;top:21px"></div><div class="hl" style="left:0px;top:487px"></div><div class="hl" style="left:427px;top:487px"></div><div class="in" style=""><div class="tb"><div class="mb"><i></i></div><div class="tt" style="right:0px;"><span class="t b " style="left:151.00px;top:0px;letter-spacing:-0.077px;">Properties_popup</span></div></div><div class="cl dlg"><svg class="ic" style="left:17px;top:13px" width="25" height="32" viewBox="0 0 25 32" ><path d="M0.600 0.600 H17 L23.400 7 V30.400 H0.600 Z" fill="#00FFFF" stroke="#000" stroke-width="1.200"/><path d="M1.200 13 L3.500 11.500 L6 15 L8 13.200 L11 16 L16 10.800 L18 13 L21 16 L22.800 15 V21 H1.200 Z" fill="#8c8c8c"/><path d="M1.200 12.500 L3.500 11.300 L6 15 L8 13.200 L11 16 L16 10.800 L18 13 L21 16 L22.800 15" fill="none" stroke="#000" stroke-width="0.900"/><path d="M3 19 l2 -3 M7 19 l2 -2.500 M12 19 l2 -3" stroke="#aaa" stroke-width="0.600"/><rect x="1.200" y="20.500" width="21.600" height="9.300" fill="#98EE98"/><path d="M1.200 20.500 H22.800" stroke="#000" stroke-width="0.900"/><path d="M17 1 V7 H23 Z" fill="#E6C898"/><path d="M17 1 V7 H23" fill="none" stroke="#000" stroke-width="0.800"/><path d="M3 25 L8 20 L13 25 V26 L12 25 L8 21.500 Z" fill="#ff2040"/><path d="M8 20 L13.500 21 L14 25.500 L12 25 Z" fill="#ff2040"/><rect x="5" y="24" width="6" height="4.500" fill="#ececec" stroke="#667" stroke-width="0.600"/><path d="M5 24 L8 21.500 L11 24 Z" fill="#ececec"/><rect x="7" y="25.500" width="1.600" height="3" fill="#667"/><ellipse cx="17.500" cy="20" rx="4.500" ry="3.600" fill="#228B22"/><circle cx="16" cy="19.500" r=".6" fill="#5f5"/><circle cx="18.500" cy="18.500" r=".6" fill="#5f5"/><circle cx="19" cy="21" r=".6" fill="#5f5"/><circle cx="15" cy="21.500" r=".5" fill="#5f5"/><rect x="16.600" y="23" width="2" height="5.500" fill="#FFA500" stroke="#a52" stroke-width="0.500"/><text x="9.400" y="9.800" font-size="8" text-anchor="middle" font-family="Liberation Sans, sans-serif" fill="#000" stroke="#000" stroke-width="0.250" textLength="12.500" lengthAdjust="spacingAndGlyphs">GIF</text><path d="M24.500 8 V31.500 H2" stroke="#6a7a8a" fill="none"/></svg><span class="t b r" style="left:0px;top:54px;width:129px;">Name:</span><span class="t b " style="left:134.70px;top:54px;letter-spacing:0.142px;">filewin.gif</span><span class="t b r" style="left:0px;top:77px;width:129px;">Directory:</span><span class="t " style="left:134.70px;top:77px;letter-spacing:0.26px;">/home/oliver/kopie</span><span class="t b r" style="left:0px;top:100px;width:129px;">Size:</span><span class="t " style="left:134.70px;top:100px;letter-spacing:-0.015px;">12662</span><span class="t b r" style="left:0px;top:123px;width:129px;">Type:</span><span class="t " style="left:134.70px;top:123px;letter-spacing:0.218px;">Ordinary file</span><span class="t b r" style="left:0px;top:146px;width:129px;">Last modification:</span><span class="t " style="left:134.70px;top:146px;letter-spacing:0.282px;">Sun Jan 14 12:05:32 1996</span><span class="t b r" style="left:0px;top:169px;width:129px;">Last status change:</span><span class="t " style="left:134.70px;top:169px;letter-spacing:0.282px;">Sun Jan 14 12:05:32 1996</span><div class="sep" style="left:11px;top:200px;width:400px"></div><span class="t b" style="left:13px;top:224px;">Owner:</span><div class="tf" style="left:59px;top:217px;width:154px;height:28px;line-height:24px;padding-left:5px">oliver</div><span class="t b" style="left:215px;top:224px;">Group:</span><div class="tf" style="left:257px;top:217px;width:154px;height:28px;line-height:24px;padding-left:5px"><i style="position:absolute;left:3px;top:4px;width:3px;height:16px;border-left:1px dotted #333"></i>users</div><span class="t b" style="left:13px;top:262px;">Permissions:</span><span class="t b" style="left:87px;top:289px;">read</span><span class="t b" style="left:140px;top:289px;">write</span><span class="t b" style="left:191px;top:289px;">exec.</span><span class="t b" style="left:0px;top:322px;left:36px">User:</span><div style="left:89px;top:325px;width:6px;height:6px;border:2px solid;border-color:#46596d #dfe7ef #dfe7ef #46596d;background:#ff1040"></div><div style="left:141px;top:325px;width:6px;height:6px;border:2px solid;border-color:#46596d #dfe7ef #dfe7ef #46596d;background:#ff1040"></div><div style="left:193px;top:325px;width:6px;height:6px;border:2px solid;border-color:#dfe7ef #46596d #46596d #dfe7ef;background:#8FADCB"></div><span class="t b" style="left:0px;top:355px;left:36px">Group:</span><div style="left:89px;top:358px;width:6px;height:6px;border:2px solid;border-color:#46596d #dfe7ef #dfe7ef #46596d;background:#ff1040"></div><div style="left:141px;top:358px;width:6px;height:6px;border:2px solid;border-color:#dfe7ef #46596d #46596d #dfe7ef;background:#8FADCB"></div><div style="left:193px;top:358px;width:6px;height:6px;border:2px solid;border-color:#dfe7ef #46596d #46596d #dfe7ef;background:#8FADCB"></div><span class="t b" style="left:0px;top:388px;left:36px">Others:</span><div style="left:89px;top:391px;width:6px;height:6px;border:2px solid;border-color:#46596d #dfe7ef #dfe7ef #46596d;background:#ff1040"></div><div style="left:141px;top:391px;width:6px;height:6px;border:2px solid;border-color:#dfe7ef #46596d #46596d #dfe7ef;background:#8FADCB"></div><div style="left:193px;top:391px;width:6px;height:6px;border:2px solid;border-color:#dfe7ef #46596d #46596d #dfe7ef;background:#8FADCB"></div><div class="sep" style="left:0px;top:422px;width:421px"></div><div class="dflt" style="left:13px;top:437px;width:61px;height:35px"></div><div class="btn" style="left:17px;top:441px;width:53px;height:27px;line-height:23px"><span style="position:static;letter-spacing:0.16px;margin-right:-0.16px">OK</span></div><div class="btn" style="left:353px;top:441px;width:53px;height:27px;line-height:23px"><span style="position:static;letter-spacing:0.274px;margin-right:-0.274px">Cancel</span></div></div></div></div>
<div class="win" style="left:839px;top:1px;width:185px;height:167px;z-index:5"><div class="in" style="right:6px;bottom:6px;box-shadow:-1px -1px 0 #606060,1px 1px 0 #fff,2px 2px 0 #fff,3px 3px 0 #fff,3px 0 0 #fff,0 3px 0 #fff"><div class="cl dlg" style="top:0"><span class="t b" style="left:6px;top:7px;">A:</span><span class="t " style="left:34.30px;top:7px;letter-spacing:0.049px;">unmounted</span><div class="btn" style="left:104px;top:3px;width:66px;height:21px;line-height:18.0px"><span style="position:static;letter-spacing:-0.215px;margin-right:0.215px">mount</span></div><span class="t b" style="left:6px;top:32px;">B:</span><span class="t " style="left:34.30px;top:32px;letter-spacing:0.005px;">/flpb</span><div class="btn" style="left:104px;top:28px;width:66px;height:21px;line-height:17px;line-height:18px"><span style="position:static;"><span style="position:static;color:#1a2430;letter-spacing:.3px;-webkit-mask-image:repeating-conic-gradient(#000 0 25%,transparent 0 50%);-webkit-mask-size:2px 2px;mask-image:repeating-conic-gradient(#000 0 25%,transparent 0 50%);mask-size:2px 2px">unmount</span></span></div><span class="t b" style="left:6px;top:57px;">CD</span><span class="t " style="left:34.30px;top:57px;letter-spacing:0.049px;">unmounted</span><div class="btn" style="left:104px;top:53px;width:66px;height:21px;line-height:18.0px"><span style="position:static;letter-spacing:-0.215px;margin-right:0.215px">mount</span></div><span class="t b" style="left:6px;top:82px;">C:</span><span class="t " style="left:34.30px;top:82px;letter-spacing:0.049px;">unmounted</span><div class="btn" style="left:104px;top:78px;width:66px;height:21px;line-height:18.0px"><span style="position:static;letter-spacing:-0.215px;margin-right:0.215px">mount</span></div><span class="t b" style="left:6px;top:107px;">D:</span><span class="t " style="left:34.30px;top:107px;letter-spacing:0.049px;">unmounted</span><div class="btn" style="left:104px;top:103px;width:66px;height:21px;line-height:18.0px"><span style="position:static;letter-spacing:-0.215px;margin-right:0.215px">mount</span></div><div class="btn" style="left:56px;top:132px;width:40px;height:22px;line-height:18px;"><span style="position:static;">Show</span></div><div class="btn" style="left:130px;top:132px;width:40px;height:22px;line-height:18px"><span style="position:static;letter-spacing:0.085px;margin-right:-0.085px">Close</span></div></div></div></div>
<div class="btn" style="left:802px;top:92px;width:131px;height:94px;z-index:20;text-align:left"><span class="t " style="left:3.50px;top:4px;letter-spacing:0.22px;">Open</span><div class="sep" style="left:0;top:22px;width:127px"></div><div class="btn" style="left:1px;top:25px;width:125px;height:21px"></div><span class="t " style="left:3.50px;top:28px;letter-spacing:-0.36px;">Edit...</span><span class="t " style="left:3.50px;top:50px;letter-spacing:0.415px;">Save icon</span><span class="t " style="left:3.50px;top:72px;letter-spacing:0.036px;">Remove from desktop</span></div>
<div class="win" style="left:630px;top:214px;width:306px;height:111px;z-index:6"><div class="vl" style="left:21px;top:0px"></div><div class="vl" style="left:283px;top:0px"></div><div class="vl" style="left:21px;top:106px"></div><div class="vl" style="left:283px;top:106px"></div><div class="hl" style="left:0px;top:21px"></div><div class="hl" style="left:301px;top:21px"></div><div class="hl" style="left:0px;top:88px"></div><div class="hl" style="left:301px;top:88px"></div><div class="in" style=""><div class="tb"><div class="mb"><i></i></div><div class="tt" style="right:34px;"><span class="t b " style="left:34.00px;top:0px;letter-spacing:-0.116px;">Applications <i class="d">-</i> xfm<i class="d">-</i>WordProc</span></div><div class="tbtn" style="right:17px"><i style="left:6px;top:6px;width:3px;height:3px;border:1px solid;border-color:#fff #606060 #606060 #fff"></i></div><div class="tbtn" style="right:0"><i style="left:3px;top:3px;width:9px;height:9px;border:1px solid;border-color:#fff #606060 #606060 #fff"></i></div></div><div class="cl snk"><div class="appb" style="left:8px;top:6px;width:80px;height:58px"></div><div class="appb" style="left:93px;top:6px;width:84px;height:58px"><svg class="ic" style="left:22px;top:4px" width="43" height="46" viewBox="0 0 43 46" ><path d="M17 1 H41 V44 H17 Z" fill="#FFFDE8" stroke="#000" stroke-width="1.200"/><path d="M24 5 h14 M26 8 h12 M23 11 h5 m2 0 h8 M24 14 h14 M25 17 h4 m2 0 h7 M24 20 h14 M26 23 h12 M27 26 h4 m2 0 h5 M28 29 h10 M30 32 h8 M33 35 h5 M35 38 h3" stroke="#000" stroke-width="1" stroke-dasharray="3 1 2 1"/><path d="M8 11 C9 -1 23 -1 24 11 C25 24 31 34 37 38 C34 43 31 41 29 38 C30 42 28 45 24 41 C22 45 17 45 15 41 C11 44 8 41 9 38 C5 40 2 38 0.800 35 C6 31 7.500 22 8 11 Z" fill="#fff" stroke="#000" stroke-width="1.600"/><path d="M16 39 C16 34 17 31 19 28 M22 40 C23 35 23 32 25 30" stroke="#000" fill="none" stroke-width="1"/><path d="M11.500 9.500 l1.700 -2.300 l1.700 2.300 l-1.700 2.300 z M16 9.500 l1.700 -2.300 l1.700 2.300 l-1.700 2.300 z" fill="#ff1040"/><path d="M12 15.500 C14 17.500 17.500 17.500 19.500 15.500" fill="none" stroke="#3040ff" stroke-width="1"/></svg></div><span class="t " style="left:110.65px;top:67px;letter-spacing:0.25px;font-size:10px;">Ghostview</span><div class="appb" style="left:182px;top:6px;width:84px;height:58px"><div style="left:6px;top:5px;width:70px;height:46px;transform:scale(1.08);transform-origin:0 0"><svg class="ic" style="left:0px;top:0px" width="64" height="42" viewBox="0 0 64 42" ><path d="M8 11 C18 8 23 3 29 6 C33 14 29 24 35 30 C28 35 22 38 18 35 C13 28 14 20 8 11Z" fill="#fff"/><path d="M5 16 C2 12 6 8 10 12 C20 8 24 2 30 6 C34 14 30 24 36 30 M18 36 C14 32 20 30 20 34 M18 36 C24 40 30 34 36 30 M8 14 C11 15 8 19 5 16 M10 12 C14 20 12 28 18 36" fill="none" stroke="#000" stroke-width="1.200"/><path d="M5 16 C2 12 6 8 10 12 C9 14 8 15 5 16Z" fill="#fff" stroke="#000" stroke-width="1"/><text x="9" y="22" font-family="Liberation Serif, serif" font-size="13" fill="#000">T</text><text x="15.500" y="25" font-family="Liberation Serif, serif" font-size="13" fill="#000">E</text><text x="22" y="22" font-family="Liberation Serif, serif" font-size="13" fill="#000">X</text><path d="M28 38 L24 30 L29 24 L38 23 L43 28 L42 36 L36 40 Z" fill="#000"/><path d="M32 26 C36 14 46 6 62 1 C58 10 50 18 38 24 Z" fill="#9a9a9a"/><path d="M32 27 C38 16 48 8 62 1 M38 18 l-4 -3 M42 15 l-4 -4 M47 11 l-3 -4 M52 8 l-2 -3 M40 22 l6 0 M45 18 l6 0 M50 13 l6 -1" stroke="#222" stroke-width="1" fill="none"/><path d="M20 32 C26 30 30 28 34 24" stroke="#fff" stroke-width="1.200" fill="none"/></svg></div></div><span class="t " style="left:210.45px;top:67px;letter-spacing:-0.463px;font-size:10px;">LaTeX</span><div style="left:280px;top:0;width:16px;height:84px;background:#7B97B5;border:1px solid;border-color:#4E6379 #C6D6E6 #C6D6E6 #4E6379"><svg class="ic" style="left:0;top:0" width="14" height="82" viewBox="0 0 14 82"><path d="M7 1.500 L12.500 12.500 H1.500 Z" fill="#8FADCB"/><path d="M1.500 12.500 L7 1.500" stroke="#C6D6E6" fill="none"/><path d="M7 1.500 L12.500 12.500 H1.500" stroke="#4E6379" fill="none"/><path d="M7 80.500 L12.500 69.500 H1.500 Z" fill="#8FADCB"/><path d="M12.500 69.500 H1.500 L7 80.500" stroke="#C6D6E6" fill="none"/><path d="M7 80.500 L12.500 69.500" stroke="#4E6379" fill="none"/></svg><div class="btn" style="left:1px;top:14px;width:12px;height:19px"></div></div></div></div></div>
<div class="win" style="left:617px;top:324px;width:407px;height:361px;z-index:7"><div class="vl" style="left:21px;top:0px"></div><div class="vl" style="left:384px;top:0px"></div><div class="vl" style="left:21px;top:356px"></div><div class="vl" style="left:384px;top:356px"></div><div class="hl" style="left:0px;top:21px"></div><div class="hl" style="left:402px;top:21px"></div><div class="hl" style="left:0px;top:338px"></div><div class="hl" style="left:402px;top:338px"></div><div class="in" style=""><div class="tb"><div class="mb"><i></i></div><div class="tt" style="right:34px;"><span class="t b " style="left:97.00px;top:0px;letter-spacing:-0.01px;">Applications <i class="d">-</i> xfm<i class="d">-</i>Tools</span></div><div class="tbtn" style="right:17px"><i style="left:6px;top:6px;width:3px;height:3px;border:1px solid;border-color:#fff #606060 #606060 #fff"></i></div><div class="tbtn" style="right:0"><i style="left:3px;top:3px;width:9px;height:9px;border:1px solid;border-color:#fff #606060 #606060 #fff"></i></div></div><div class="cl snk"><div class="appb" style="left:6px;top:6px"></div><div class="appb" style="left:81px;top:6px"><svg class="ic" style="left:13px;top:9px" width="56" height="37" viewBox="0 0 56 37" ><g transform="translate(0,0)"><path d="M43 1.500 L48 5 V21 L43 24 Z" fill="#9a9a9a"/><rect x="13" y="1" width="31" height="23" rx="2" fill="#dcdcdc"/><path d="M13.500 23 V3 Q13.500 1.500 15 1.500 H43" fill="none" stroke="#fafafa" stroke-width="1"/><path d="M14 23.500 H43" stroke="#b4b4b4"/><rect x="16" y="4" width="23" height="17" rx="1.500" fill="#556B2F"/><path d="M18 6.500 h5 m1 0 h4 m1 0 h2 M18 8.500 h9 M18 10.500 h14 M18 12.500 h6 m1 0 h6 M18 14.500 h3 m1 0 h5 m1 0 h2 M18 16.500 h6" stroke="#fff" stroke-width="1.100"/><path d="M16 24 H44 L46 22.500 V27 L44 29 H16 Z" fill="#b8b8b8"/><path d="M16 24 H44 V29 H16 Z" fill="#d4d4d4"/><path d="M34 26.500 H41" stroke="#000" stroke-width="1.200"/><path d="M12 29.500 H41 L37 35 H7 Z" fill="#f6f6f6" stroke="#b8b8b8" stroke-width="0.800"/><path d="M11 32 H38" stroke="#d0d0d0"/><path d="M43 32 l5 -2.500 l3.500 1 l-1 3 l-5 2 l-3 -1 z" fill="#e4e4e4" stroke="#999" stroke-width="0.600"/><path d="M48 29.500 c2 -3 4.500 -2 3.500 0.500" fill="none" stroke="#bbb" stroke-width="0.800"/></g><path d="M6 4 L14 2 V12 Z M6 22 L14 15 L16 23 Z" fill="#ff2040"/></svg></div><span class="t " style="left:99.00px;top:67px;letter-spacing:-0.543px;font-size:10px;">Terminal</span><div class="appb" style="left:156px;top:6px"><svg class="ic" style="left:9px;top:0px" width="49" height="48" viewBox="0 0 49 48" ><path d="M1 16 H9 V10 H17 V13 H27 V12 H37 V10 H48 V47 H1 Z" fill="#000"/><rect x="1.500" y="16.500" width="6" height="30" fill="#e8e8e8"/><path d="M3 20 h3 M3 23 h3 M3 26 h3 M3 29 h3" stroke="#000" stroke-width="1.200"/><rect x="4" y="42" width="2" height="2" fill="#000"/><path d="M2 17 V46" stroke="#fff"/><rect x="10" y="10.500" width="7" height="36" fill="#e87088"/><path d="M11 12 V46 M13 12 V46 M15 12 V46" stroke="#fff" stroke-width="0.800" stroke-dasharray="1 1"/><path d="M11 19 l5 5 M16 19 l-5 5 M11 27 l5 5 M16 27 l-5 5" stroke="#a01030" stroke-width="1.200"/><rect x="19" y="13.500" width="7" height="33" fill="#c8c8c8"/><path d="M21 35 h4 M21 38 h4" stroke="#000" stroke-width="1.200"/><path d="M19.500 14 V46" stroke="#eee"/><rect x="29" y="12.500" width="6" height="34" fill="#a8dff0"/><path d="M30 13 V46 M32 13 V46 M34 13 V46" stroke="#2a7fa0" stroke-width="0.800" stroke-dasharray="1 1"/><rect x="38" y="10.500" width="8.500" height="36" fill="#e4e4e4"/><path d="M41 14 V32 M43.500 16 V28" stroke="#000" stroke-width="1.200" stroke-dasharray="3 1"/><path d="M38 38 h8 M38 41 h8" stroke="#999"/><path d="M38.500 11 V46" stroke="#fff"/><text x="23" y="22" font-family="Liberation Sans, sans-serif" font-weight="bold" font-size="29" text-anchor="middle" fill="#ffee00" stroke="#000" stroke-width="1.100">?</text></svg></div><span class="t " style="left:170.62px;top:67px;letter-spacing:-0.158px;font-size:10px;">manpage</span><div class="appb" style="left:231px;top:6px"><svg class="ic" style="left:9px;top:2px" width="48" height="48" viewBox="0 0 48 48" ><path d="M24 1 L47 24 L24 47 L1 24 Z" fill="#fff" stroke="#000" stroke-width="1"/><g><circle cx="27.500" cy="23" r="6" stroke-dasharray="2.200 1.600" stroke-width="3" fill="none" stroke="#4a8a8c"/><circle cx="27.500" cy="23" r="5.200" fill="#5f9ea0" stroke="#1a3a3a" stroke-width="0.600"/><circle cx="27.500" cy="23" r="2.300" fill="#fff" stroke="#1a3a3a" stroke-width="0.600"/></g><g><circle cx="21.500" cy="13.500" r="3.600" stroke-dasharray="1.600 1.200" stroke-width="2" fill="none" stroke="#333"/><circle cx="21.500" cy="13.500" r="3.200" fill="#b4b4b4" stroke="#222" stroke-width="0.600"/><circle cx="21.500" cy="13.500" r="1.100" fill="#fff"/><circle cx="21.500" cy="32.500" r="3.600" stroke-dasharray="1.600 1.200" stroke-width="2" fill="none" stroke="#333"/><circle cx="21.500" cy="32.500" r="3.200" fill="#b4b4b4" stroke="#222" stroke-width="0.600"/><circle cx="21.500" cy="32.500" r="1.100" fill="#fff"/></g></svg></div><span class="t " style="left:254.75px;top:67px;letter-spacing:-0.65px;font-size:10px;">make</span><div class="appb" style="left:306px;top:6px"><svg class="ic" style="left:9px;top:2px" width="48" height="48" viewBox="0 0 48 48" ><path d="M24 1 L47 24 L24 47 L1 24 Z" fill="#fff" stroke="#000" stroke-width="1"/><path d="M18 9 H30 L35 14 V38 H18 Z" fill="#fff" stroke="#555" stroke-width="1"/><path d="M30 9 V14 H35" fill="#ddd" stroke="#555" stroke-width="0.800"/><path d="M14 30 h18 M14 33 h16 M14 36 h14 M28 20 h6 M28 24 h6" stroke="#000" stroke-width="1"/><circle cx="19" cy="20" r="8" fill="#d0e8f0" stroke="#407080" stroke-width="1.800"/><circle cx="19" cy="20" r="6" fill="none" stroke="#80b0c0" stroke-width="1"/><text x="19" y="23" font-size="7" font-weight="bold" text-anchor="middle" font-family="Liberation Sans, sans-serif">ABC</text><path d="M25 26 L33 34" stroke="#333" stroke-width="2.500"/><path d="M29 30 L34 35" stroke="#ffee00" stroke-width="2"/></svg></div><span class="t " style="left:330.75px;top:67px;letter-spacing:0.167px;font-size:10px;">grep</span><div class="appb" style="left:6px;top:85px"></div><div class="appb" style="left:81px;top:85px"><svg class="ic" style="left:7px;top:12px" width="43" height="32" viewBox="0 0 43 32" ><rect x="0.800" y="0.800" width="40" height="29" fill="#fff" stroke="#000" stroke-width="1.600"/><path d="M41.500 2 V30.500 H2" stroke="#000" fill="none"/><path d="M24 4 h14 M26 7 h12 M24 10 h14 M26 13 h12 M24 16 h14 M4 23 h34 M4 26 h28 M4 20 h10" stroke="#000" stroke-dasharray="2 1 3 1"/><circle cx="22" cy="8.500" r="7.500" fill="#e8f0f0" stroke="#000" stroke-width="1"/><circle cx="22" cy="8.500" r="6" fill="none" stroke="#5f9ea0" stroke-width="1.400"/><path d="M19 5 h4 l2 2 v5 h-6 z" fill="#fff" stroke="#000" stroke-width="0.800"/><path d="M27 14 L38 27" stroke="#000" stroke-width="3.200"/><path d="M27 14 L38 27" stroke="#5f9ea0" stroke-width="1.600"/></svg></div><span class="t " style="left:94.75px;top:146px;letter-spacing:-0.467px;font-size:10px;">Spell word</span><div class="appb" style="left:156px;top:85px"><svg class="ic" style="left:6px;top:4px" width="55" height="50" viewBox="0 0 55 50" ><defs><pattern id="dz" width="2" height="2" patternUnits="userSpaceOnUse"><rect width="2" height="2" fill="#fff"/><rect width="1" height="1" fill="#000"/><rect x="1" y="1" width="1" height="1" fill="#000"/></pattern><pattern id="dl" width="2" height="2" patternUnits="userSpaceOnUse"><rect width="2" height="2" fill="#fff"/><rect width="1" height="1" fill="#000"/></pattern></defs><path d="M2.500 21 C12 9 40 7 51.500 21 C44 33 16 37 2.500 21 Z" fill="#fff"/><path d="M3 21 C10 12 20 10 26 10 L26 30 C16 31 8 27 3 21 Z" fill="url(#dl)"/><path d="M6 24 C14 34 38 36 47 25" fill="none" stroke="#000" stroke-width="1"/><path d="M10 27 C18 31 30 31 38 28" fill="none" stroke="#000" stroke-width="0.800"/><circle cx="29.500" cy="18.600" r="8" fill="url(#dz)" stroke="#000" stroke-width="0.800"/><circle cx="28.800" cy="17.200" r="3.800" fill="#000"/><rect x="30" y="15" width="1.500" height="1.500" fill="#fff"/><path d="M2 22 C4 16 14 8 27 8 C40 8 48 15 52 21 L50 22 C44 15 38 11.500 27 11.500 C16 11.500 8 17 4.500 23 Z" fill="#000"/><path d="M3 16 C8 9 14 6 21 4 M2.500 13 C7 7 13 4 20 2.500 M3.500 10 C8 5 13 3 19 1.500 M5 8 L14 3 M7 18 L3 19 M34 8 L37 2 M37 9 L41 3 M41 11 L46 5 M44 13 L49 8 M46 16 L52 12 M48 24 L52 27 M46 27 L50 31 M43 30 L46 34 M39 32 L41 36 M33 34 L34 37 M8 26 L5 29 M12 29 L9 32" fill="none" stroke="#000" stroke-width="1.100"/><text x="27.700" y="45.700" font-size="11.500" text-anchor="middle" font-family="DejaVu Sans Mono, Liberation Mono, monospace" textLength="24.500">diff</text></svg></div><span class="t " style="left:183.00px;top:146px;letter-spacing:0.383px;font-size:10px;">Diff</span><div class="appb" style="left:231px;top:85px"><svg class="ic" style="left:9px;top:2px" width="48" height="48" viewBox="0 0 48 48" ><path d="M24 1 L47 24 L24 47 L1 24 Z" fill="#fff" stroke="#000" stroke-width="1"/><path d="M17 9 H27 C31 9 33 11 33 15 V27 C33 30 31 32 28 32 H20 V27 H26.500 C27.500 27 28 26.500 28 25.500 V16 C28 15 27.500 14.500 26.500 14.500 H17 Z" fill="#000"/><rect x="17" y="9" width="6" height="6.500" fill="#000"/><rect x="18.500" y="24" width="4" height="12" fill="#000"/><rect x="17" y="24" width="7" height="3.500" fill="#000"/><path d="M14 35.500 H25" stroke="#000" stroke-width="1.400"/><path d="M14.500 34 V37 M24.500 34 V37" stroke="#000"/><text x="19.500" y="22.300" font-size="6.500" font-weight="bold" text-anchor="middle" font-family="Liberation Sans, sans-serif" textLength="9.500" lengthAdjust="spacingAndGlyphs">ZIP</text></svg></div><span class="t " style="left:256.88px;top:146px;letter-spacing:-0.033px;font-size:10px;">gzip</span><div class="appb" style="left:306px;top:85px"><svg class="ic" style="left:9px;top:2px" width="48" height="48" viewBox="0 0 48 48" ><path d="M24 1 L47 24 L24 47 L1 24 Z" fill="#fff" stroke="#000" stroke-width="1"/><text x="22" y="17" font-size="8" text-anchor="middle" font-family="Liberation Sans, sans-serif">TAR</text><rect x="14" y="20" width="20" height="16" fill="#a8a8a8" stroke="#000" stroke-width="1"/><circle cx="27" cy="30" r="4.500" fill="#000"/><circle cx="27" cy="30" r="1.200" fill="#a8a8a8"/><circle cx="18.500" cy="31.500" r="2" fill="none" stroke="#000" stroke-width="1.300"/><path d="M17 30 C17 22 30 20 31 27" fill="none" stroke="#000" stroke-width="1.200"/></svg></div><span class="t " style="left:322.62px;top:146px;letter-spacing:0.129px;font-size:10px;">tar+gzip</span><div class="appb" style="left:6px;top:164px"><svg class="ic" style="left:20px;top:10px" width="25" height="32" viewBox="0 0 25 32" ><defs><pattern id="dots" width="2" height="2" patternUnits="userSpaceOnUse"><rect width="2" height="2" fill="#fff"/><rect width="1" height="1" fill="#000"/></pattern></defs><rect x="0.500" y="0.500" width="24" height="31" fill="url(#dots)" stroke="#000"/><path d="M6 1 L12.500 12 L19 1 Z" fill="#fff" stroke="#000" stroke-width="0.800"/><path d="M8 1 L12.500 9 L17 1" fill="#ddd"/><rect x="10.500" y="11" width="4" height="20" fill="#fff" stroke="#000" stroke-width="0.600"/><path d="M10.500 20 h4 M10.500 22 h4 M10.500 24 h4 M10.500 26 h4 M10.500 28 h4" stroke="#000" stroke-width="0.700"/><path d="M9 11 h7 v6 l-2 3 h-3 l-2 -3 z" fill="#ffe000" stroke="#000" stroke-width="0.800"/><rect x="11.500" y="13" width="2" height="3" fill="#000"/></svg></div><span class="t " style="left:26.50px;top:225px;letter-spacing:-0.09px;font-size:10px;">gunzip</span><div class="appb" style="left:81px;top:164px"><svg class="ic" style="left:19px;top:14px" width="28" height="26" viewBox="0 0 28 26" ><path d="M15 1 H24 L27 4 V9 H15 Z" fill="#fff" stroke="#555" stroke-width="0.800"/><path d="M24 1 V4 H27" fill="none" stroke="#555" stroke-width="0.700"/><path d="M1 14 H6 L7 12.500 H11 L12 14 H20 V24 H1 Z" fill="#aaa" stroke="#000" stroke-width="1"/><path d="M6 16 H18 V22 H6 Z" fill="#ccc" stroke="#000" stroke-width="0.700"/><path d="M6 19 H27 L21 25 H1 Z" fill="#ffee00" stroke="#000" stroke-width="0.800"/><path d="M10 15 L19 7" stroke="#3030e0" stroke-width="1.800"/><path d="M16 5.500 L21 5 L20 10 Z" fill="#3030e0"/></svg></div><span class="t " style="left:104.50px;top:225px;letter-spacing:0.05px;font-size:10px;">untar</span><div class="appb" style="left:156px;top:164px"><svg class="ic" style="left:19px;top:14px" width="28" height="26" viewBox="0 0 28 26" ><path d="M15 1 H24 L27 4 V9 H15 Z" fill="#fff" stroke="#555" stroke-width="0.800"/><path d="M24 1 V4 H27" fill="none" stroke="#555" stroke-width="0.700"/><path d="M1 14 H6 L7 12.500 H11 L12 14 H20 V24 H1 Z" fill="#aaa" stroke="#000" stroke-width="1"/><path d="M6 16 H18 V22 H6 Z" fill="#ccc" stroke="#000" stroke-width="0.700"/><path d="M6 19 H27 L21 25 H1 Z" fill="#ffee00" stroke="#000" stroke-width="0.800"/><path d="M10 15 L19 7" stroke="#3030e0" stroke-width="1.800"/><path d="M16 5.500 L21 5 L20 10 Z" fill="#3030e0"/></svg></div><span class="t " style="left:178.50px;top:225px;letter-spacing:0.138px;font-size:10px;">untgz</span><div class="appb" style="left:231px;top:164px"><svg class="ic" style="left:8px;top:1px" width="50" height="52" viewBox="0 0 50 52" ><circle cx="27" cy="26" r="15" fill="#f02040" stroke="#000" stroke-width="1"/><path d="M27 11 V41" stroke="#000" stroke-width="1.200"/><path d="M16 16 a15 15 0 0 0 -4 10 l6 -2 z" fill="#000"/><circle cx="15" cy="20" r="5" fill="#000"/><g fill="#000"><circle cx="22" cy="18" r="2"/><circle cx="33" cy="18" r="2"/><circle cx="20" cy="27" r="2"/><circle cx="35" cy="27" r="2"/><circle cx="23" cy="35" r="2"/><circle cx="32" cy="35" r="2"/><circle cx="38" cy="21" r="1.500"/></g><path d="M12 14 l-6 -3 M10 20 h-7 M12 27 l-6 3 M41 18 l5 -3 M42 28 l5 2 M38 36 l4 4 M16 37 l-4 4" stroke="#000" stroke-width="1.200"/><path d="M2 0 L10 0 L48 50 L40 50 Z" fill="#000"/><path d="M45.500 1 L48 1 L7 52 L4.500 52 Z" fill="#000"/></svg></div><span class="t " style="left:252.00px;top:225px;letter-spacing:-0.362px;font-size:10px;">Debug</span><div class="appb" style="left:306px;top:164px"><svg class="ic" style="left:18px;top:16px" width="30" height="26" viewBox="0 0 30 26" ><path d="M0.5 3.5 H15.5 L17.5 0.5 H23.5 L25.5 3.5 H28.5 V24.5 H0.5 Z" fill="#F5DEB3" stroke="#000" stroke-width="1"/><path d="M29.5 4 V25.5 H1" fill="none" stroke="#5b4a2c" stroke-width="1"/><path d="M16.500 3.500 H25" stroke="#d9bc8c" stroke-width="1"/></svg></div><span class="t " style="left:314.25px;top:225px;letter-spacing:0.235px;font-size:10px;">Motif Guide</span><div class="appb" style="left:6px;top:243px"><svg class="ic" style="left:18px;top:16px" width="30" height="26" viewBox="0 0 30 26" ><path d="M0.5 3.5 H15.5 L17.5 0.5 H23.5 L25.5 3.5 H28.5 V24.5 H0.5 Z" fill="#F5DEB3" stroke="#000" stroke-width="1"/><path d="M29.5 4 V25.5 H1" fill="none" stroke="#5b4a2c" stroke-width="1"/><path d="M16.500 3.500 H25" stroke="#d9bc8c" stroke-width="1"/></svg></div><span class="t " style="left:34.50px;top:304px;letter-spacing:-0.175px;font-size:10px;">src</span><div class="appb" style="left:81px;top:243px"><svg class="ic" style="left:18px;top:16px" width="30" height="26" viewBox="0 0 30 26" ><path d="M0.5 3.5 H15.5 L17.5 0.5 H23.5 L25.5 3.5 H28.5 V24.5 H0.5 Z" fill="#F5DEB3" stroke="#000" stroke-width="1"/><path d="M29.5 4 V25.5 H1" fill="none" stroke="#5b4a2c" stroke-width="1"/><path d="M16.500 3.500 H25" stroke="#d9bc8c" stroke-width="1"/></svg></div><span class="t " style="left:100.50px;top:304px;letter-spacing:0.25px;font-size:10px;">Moxfm</span><div class="appb" style="left:156px;top:243px"><svg class="ic" style="left:18px;top:16px" width="30" height="26" viewBox="0 0 30 26" ><path d="M0.5 3.5 H15.5 L17.5 0.5 H23.5 L25.5 3.5 H28.5 V24.5 H0.5 Z" fill="#F5DEB3" stroke="#000" stroke-width="1"/><path d="M29.5 4 V25.5 H1" fill="none" stroke="#5b4a2c" stroke-width="1"/><path d="M16.500 3.500 H25" stroke="#d9bc8c" stroke-width="1"/></svg></div><span class="t " style="left:178.50px;top:304px;letter-spacing:-0.15px;font-size:10px;">Kopie</span><div class="appb" style="left:231px;top:243px"><svg class="ic" style="left:18px;top:16px" width="30" height="26" viewBox="0 0 30 26" ><path d="M0.5 3.5 H15.5 L17.5 0.5 H23.5 L25.5 3.5 H28.5 V24.5 H0.5 Z" fill="#F5DEB3" stroke="#000" stroke-width="1"/><path d="M29.5 4 V25.5 H1" fill="none" stroke="#5b4a2c" stroke-width="1"/><path d="M16.500 3.500 H25" stroke="#d9bc8c" stroke-width="1"/></svg></div><span class="t " style="left:248.25px;top:304px;letter-spacing:0.21px;font-size:10px;">DOS C:</span><div class="appb" style="left:306px;top:243px"><svg class="ic" style="left:18px;top:16px" width="30" height="26" viewBox="0 0 30 26" ><path d="M0.5 3.5 H15.5 L17.5 0.5 H23.5 L25.5 3.5 H28.5 V24.5 H0.5 Z" fill="#F5DEB3" stroke="#000" stroke-width="1"/><path d="M29.5 4 V25.5 H1" fill="none" stroke="#5b4a2c" stroke-width="1"/><path d="M16.500 3.500 H25" stroke="#d9bc8c" stroke-width="1"/></svg></div><span class="t " style="left:323.25px;top:304px;letter-spacing:0.21px;font-size:10px;">DOS D:</span></div></div></div>
<div style="left:937px;top:686px;width:87px;height:82px;background:#958394;border-top:2px solid #4a404a;z-index:8"><div class="mono" style="left:0;top:0;width:87px;height:14px;background:#CDB4CD;color:#5c4c5c;text-align:center;line-height:16px;font-size:12px">Misc</div><div style="left:0;top:14px;width:87px;height:1px;background:#4a404a"></div><div style="left:0;top:15px;width:43px;height:33px;background:#CDB4CD;overflow:hidden"><div style="left:1px;top:1px;width:12px;height:18px;background:#D4D4D4;border:1px solid #3a343a;font-family:'Liberation Mono',monospace;font-size:7px;line-height:8px;overflow:hidden;white-space:nowrap"></div><div style="left:4px;top:7px;width:9px;height:9px;background:#D4D4D4;border:1px solid #3a343a;font-family:'Liberation Mono',monospace;font-size:7px;line-height:8px;overflow:hidden;white-space:nowrap"><span style="left:3px;top:1px">F</span></div><div style="left:12px;top:0px;width:18px;height:21px;background:#D4D4D4;border:1px solid #3a343a;font-family:'Liberation Mono',monospace;font-size:7px;line-height:8px;overflow:hidden;white-space:nowrap"><span style="left:3px;top:3px;font-size:8px">Prc</span></div><div style="left:34px;top:0px;width:8px;height:7px;background:#D4D4D4;border:1px solid #3a343a;font-family:'Liberation Mono',monospace;font-size:7px;line-height:8px;overflow:hidden;white-space:nowrap"></div><div style="left:29px;top:8px;width:9px;height:5px;background:#D4D4D4;border:1px solid #3a343a;font-family:'Liberation Mono',monospace;font-size:7px;line-height:8px;overflow:hidden;white-space:nowrap"></div><div style="left:25px;top:13px;width:17px;height:15px;background:#D4D4D4;border:1px solid #3a343a;font-family:'Liberation Mono',monospace;font-size:7px;line-height:8px;overflow:hidden;white-space:nowrap"><span style="left:3px;top:3px;font-size:8px">App</span></div><div style="left:7px;top:20px;width:12px;height:6px;background:#D4D4D4;border:1px solid #3a343a;font-family:'Liberation Mono',monospace;font-size:7px;line-height:8px;overflow:hidden;white-space:nowrap"></div><div style="left:5px;top:25px;width:18px;height:6px;background:#D4D4D4;border:1px solid #3a343a;font-family:'Liberation Mono',monospace;font-size:7px;line-height:8px;overflow:hidden;white-space:nowrap"></div><div style="left:0px;top:23px;width:3px;height:5px;background:#D4D4D4;border:1px solid #3a343a;font-family:'Liberation Mono',monospace;font-size:7px;line-height:8px;overflow:hidden;white-space:nowrap"></div><div style="left:24px;top:29px;width:18px;height:4px;background:#D4D4D4;border:1px solid #3a343a;font-family:'Liberation Mono',monospace;font-size:7px;line-height:8px;overflow:hidden;white-space:nowrap"></div><div style="left:38px;top:9px;width:4px;height:3px;background:#D4D4D4;border:1px solid #3a343a;font-family:'Liberation Mono',monospace;font-size:7px;line-height:8px;overflow:hidden;white-space:nowrap"></div><div style="left:38px;top:5px;width:4px;height:3px;background:#D4D4D4;border:1px solid #3a343a;font-family:'Liberation Mono',monospace;font-size:7px;line-height:8px;overflow:hidden;white-space:nowrap"></div></div><div style="left:43px;top:15px;width:1px;height:67px;background:#4a404a"></div><div style="left:0;top:48px;width:87px;height:1px;background:#4a404a"></div></div></body></html>
